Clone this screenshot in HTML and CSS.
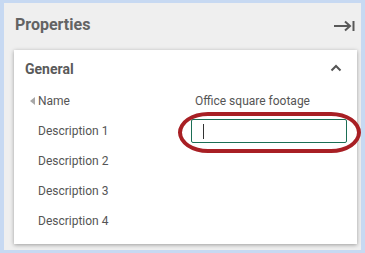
FILE: index.html
```html
<!DOCTYPE html>
<html>
<head>
<meta charset="utf-8">
<link rel="stylesheet" href="styles.css">
</head>
<body>
<div class="frame">
  <div class="panel">
    <div class="panel-head">
      <span class="panel-title">Properties</span>
      <svg class="collapse-icon" width="22" height="12" viewBox="0 0 22 12">
        <path d="M1 6 H17 M12 1.5 L17 6 L12 10.5" fill="none" stroke="#585858" stroke-width="2"/>
        <path d="M20.5 1 V11" stroke="#585858" stroke-width="2"/>
      </svg>
    </div>
    <div class="card">
      <div class="card-head">
        <span class="card-title">General</span>
        <svg class="chev" width="12" height="8" viewBox="0 0 12 8">
          <path d="M1.5 6.5 L6 2 L10.5 6.5" fill="none" stroke="#555" stroke-width="2"/>
        </svg>
      </div>
      <div class="rows">
        <div class="row">
          <div class="label"><span class="tri"></span>Name</div>
          <div class="value"><span class="value-text">Office square footage</span></div>
        </div>
        <div class="row">
          <div class="label">Description 1</div>
          <div class="value"><div class="input"><span class="caret"></span></div></div>
        </div>
        <div class="row"><div class="label">Description 2</div><div class="value"></div></div>
        <div class="row"><div class="label">Description 3</div><div class="value"></div></div>
        <div class="row"><div class="label">Description 4</div><div class="value"></div></div>
      </div>
    </div>
  </div>
  <div class="highlight"></div>
</div>
</body>
</html>
```
FILE: styles.css
```css
html, body {
  margin: 0;
  padding: 0;
}
body {
  font-family: Roboto, "Liberation Sans", sans-serif;
  width: 365px;
  height: 253px;
  overflow: hidden;
}
.frame {
  position: relative;
  width: 365px;
  height: 253px;
  box-sizing: border-box;
  background: #c7d9f2;
  padding: 3px 4px 3px 4px;
}
.panel {
  background: #efefef;
  height: 247px;
  box-sizing: border-box;
  padding: 0 4px 0 10px;
  display: flex;
  flex-direction: column;
}
.panel-head {
  height: 47px;
  display: flex;
  align-items: center;
  justify-content: space-between;
  padding: 0 2px 0 1px;
  box-sizing: border-box;
}
.panel-title {
  font-size: 16px;
  font-weight: 700;
  color: #636363;
  margin-top: -4px;
}
.collapse-icon {
  margin-top: -1px;
}
.card {
  background: #fff;
  height: 194px;
  box-sizing: border-box;
  box-shadow: 0 1px 4px rgba(0, 0, 0, 0.35);
  display: flex;
  flex-direction: column;
}
.card-head {
  height: 36px;
  display: flex;
  align-items: center;
  justify-content: space-between;
  padding: 0 15px 0 11px;
}
.card-title {
  font-size: 14px;
  font-weight: 700;
  color: #5a5a5a;
  margin-top: 2px;
}
.chev {
  margin-top: -1px;
}
.rows {
  display: flex;
  flex-direction: column;
}
.row {
  height: 30px;
  display: flex;
  align-items: center;
}
.label {
  width: 177px;
  padding-left: 24px;
  box-sizing: border-box;
  position: relative;
  font-size: 12px;
  color: #555;
}
.tri {
  position: absolute;
  left: 16px;
  top: 50%;
  margin-top: -4px;
  width: 0;
  height: 0;
  border-top: 4px solid transparent;
  border-bottom: 4px solid transparent;
  border-right: 5px solid #a8a8a8;
}
.value {
  flex: 1;
  padding-right: 10px;
  font-size: 12px;
  color: #555;
}
.value-text {
  padding-left: 4px;
}
.input {
  height: 24px;
  width: 156px;
  box-sizing: border-box;
  border: 1px solid #1b6e55;
  border-radius: 2px;
  display: flex;
  align-items: center;
  padding-left: 11px;
}
.caret {
  width: 1px;
  height: 15px;
  background: #333;
}
.highlight {
  position: absolute;
  left: 178px;
  top: 112px;
  width: 183px;
  height: 41px;
  box-sizing: border-box;
  border: 4px solid #a81f24;
  border-radius: 30px / 50%;
}
```
